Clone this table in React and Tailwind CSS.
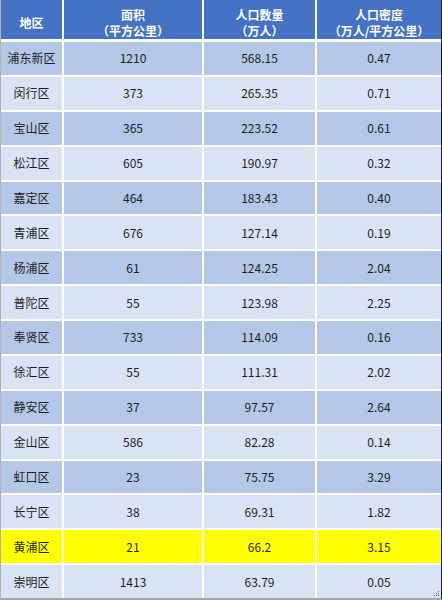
const rows = [
  ["浦东新区", "1210", "568.15", "0.47"],
  ["闵行区", "373", "265.35", "0.71"],
  ["宝山区", "365", "223.52", "0.61"],
  ["松江区", "605", "190.97", "0.32"],
  ["嘉定区", "464", "183.43", "0.40"],
  ["青浦区", "676", "127.14", "0.19"],
  ["杨浦区", "61", "124.25", "2.04"],
  ["普陀区", "55", "123.98", "2.25"],
  ["奉贤区", "733", "114.09", "0.16"],
  ["徐汇区", "55", "111.31", "2.02"],
  ["静安区", "37", "97.57", "2.64"],
  ["金山区", "586", "82.28", "0.14"],
  ["虹口区", "23", "75.75", "3.29"],
  ["长宁区", "38", "69.31", "1.82"],
  ["黄浦区", "21", "66.2", "3.15"],
  ["崇明区", "1413", "63.79", "0.05"],
];

const cols = "grid grid-cols-[61px_138px_111px_124px] gap-x-[2px]";

function HeaderCell({ top, bottom }) {
  return (
    <div className="flex flex-col items-center justify-center bg-[#4472c4] pt-[6px] text-[12px] font-bold leading-[16px] text-white">
      <span>{top}</span>
      {bottom && <span>{bottom}</span>}
    </div>
  );
}

export default function App() {
  return (
    <div
      className="relative h-[600px] w-[442px] border-b-2 border-l border-r border-b-[#a6a6a6] border-l-[#b0b0b0] border-r-[#1c2233] bg-white"
      style={{ fontFamily: '"Noto Sans CJK SC", "Noto Sans", sans-serif' }}
    >
      <div className={`${cols} h-[39px]`}>
        <HeaderCell top="地区" />
        <HeaderCell top="面积" bottom="（平方公里）" />
        <HeaderCell top="人口数量" bottom="（万人）" />
        <HeaderCell top="人口密度" bottom="（万人/平方公里）" />
      </div>
      <div className="mt-[3px] flex flex-col gap-y-[2px]">
        {rows.map((row, i) => {
          const bg = i === 14 ? "bg-[#ffff00]" : i % 2 === 0 ? "bg-[#b4c7e7]" : "bg-[#dae3f3]";
          return (
            <div key={row[0]} className={`${cols} h-[32.875px]`}>
              {row.map((cell, j) => (
                <div key={j} className={`flex items-center justify-center text-[12px] text-[#1f1f1f] ${bg}`}>
                  {cell}
                </div>
              ))}
            </div>
          );
        })}
      </div>
      <svg className="absolute bottom-[1px] right-[1px]" width="6" height="6" viewBox="0 0 6 6">
        <rect x="4" y="0" width="1" height="1" fill="#4472c4" />
        <rect x="2" y="2" width="1" height="1" fill="#4472c4" />
        <rect x="4" y="2" width="1" height="1" fill="#4472c4" />
        <rect x="0" y="4" width="1" height="1" fill="#4472c4" />
        <rect x="2" y="4" width="1" height="1" fill="#4472c4" />
        <rect x="4" y="4" width="1" height="1" fill="#4472c4" />
      </svg>
    </div>
  );
}
